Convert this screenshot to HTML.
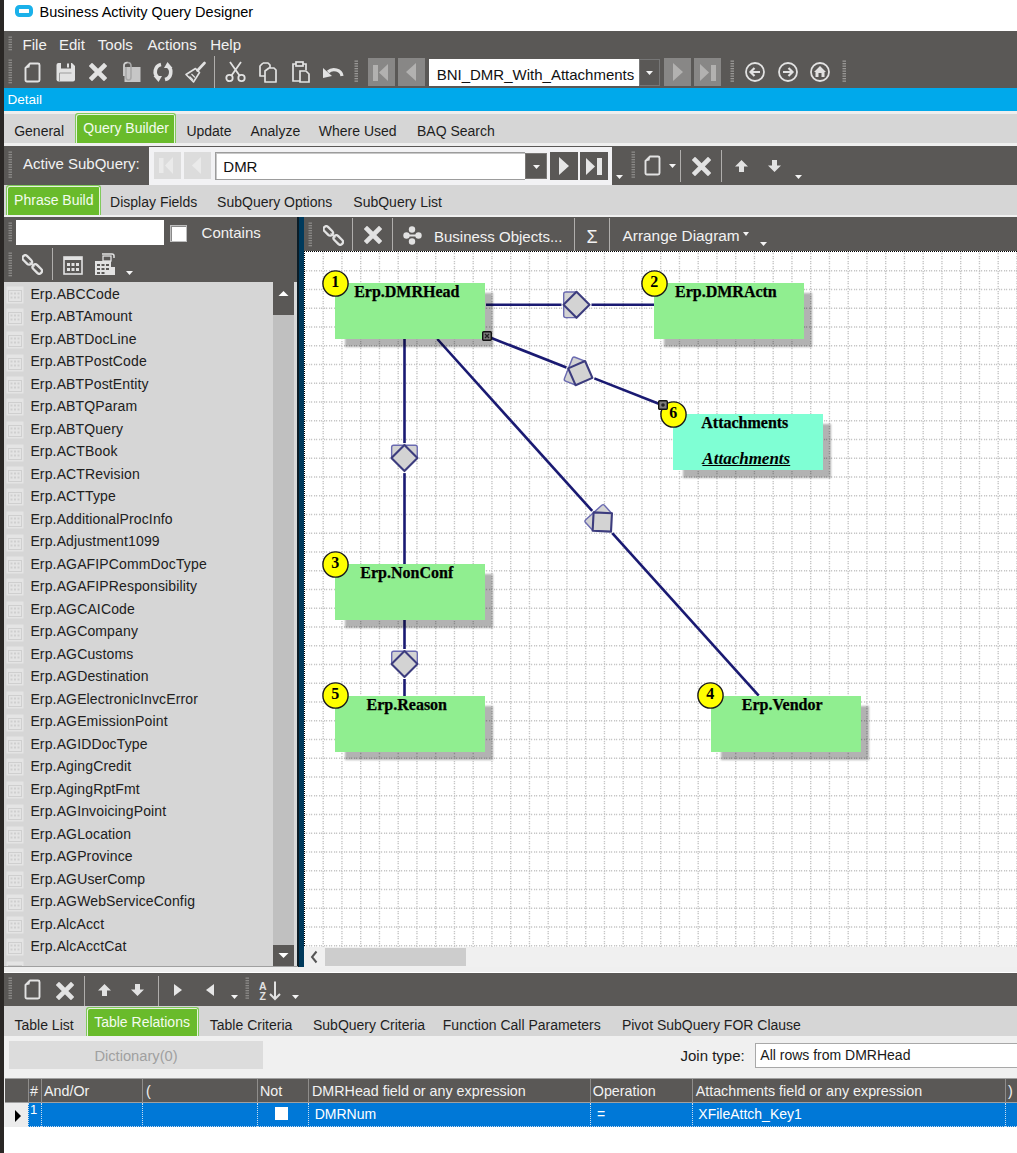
<!DOCTYPE html>
<html><head><meta charset="utf-8"><style>
html,body{margin:0;padding:0;background:#fff;}
#root{position:relative;width:1017px;height:1153px;overflow:hidden;font-family:"Liberation Sans",sans-serif;}
#root>div,#root>span,#root>svg{position:absolute;display:block;}
.t{white-space:nowrap;line-height:1;}
</style></head><body><div id="root">
<div style="left:0px;top:0px;width:4px;height:1153px;background:#2a2725;"></div>
<div style="left:4px;top:0px;width:1013px;height:31px;background:#ffffff;"></div>
<svg style="left:15px;top:5px;" width="18" height="12" viewBox="0 0 18 12"><rect x="2" y="2" width="14" height="8" rx="2.5" fill="none" stroke="#1ab1ea" stroke-width="4"/></svg>
<span class="t" style="left:39.6px;top:4.53px;font-size:14.5px;color:#000;">Business Activity Query Designer</span>
<div style="left:4px;top:31px;width:1013px;height:57px;background:#5a5856;"></div>
<svg style="left:8px;top:36px;" width="4" height="15" viewBox="0 0 4 15"><rect x="0.5" y="0.50" width="3.5" height="1.3" fill="#8c8a88"/><rect x="0.5" y="3.00" width="3.5" height="1.3" fill="#8c8a88"/><rect x="0.5" y="5.50" width="3.5" height="1.3" fill="#8c8a88"/><rect x="0.5" y="8.00" width="3.5" height="1.3" fill="#8c8a88"/><rect x="0.5" y="10.50" width="3.5" height="1.3" fill="#8c8a88"/><rect x="0.5" y="13.00" width="3.5" height="1.3" fill="#8c8a88"/></svg>
<span class="t" style="left:22.6px;top:37.00px;font-size:15px;color:#f2f2f2;">File</span>
<span class="t" style="left:59px;top:37.00px;font-size:15px;color:#f2f2f2;">Edit</span>
<span class="t" style="left:97.8px;top:37.00px;font-size:15px;color:#f2f2f2;">Tools</span>
<span class="t" style="left:147.5px;top:37.00px;font-size:15px;color:#f2f2f2;">Actions</span>
<span class="t" style="left:210.2px;top:37.00px;font-size:15px;color:#f2f2f2;">Help</span>
<svg style="left:8px;top:59px;" width="4" height="26" viewBox="0 0 4 26"><rect x="0.5" y="0.50" width="3.5" height="1.3" fill="#8c8a88"/><rect x="0.5" y="3.00" width="3.5" height="1.3" fill="#8c8a88"/><rect x="0.5" y="5.50" width="3.5" height="1.3" fill="#8c8a88"/><rect x="0.5" y="8.00" width="3.5" height="1.3" fill="#8c8a88"/><rect x="0.5" y="10.50" width="3.5" height="1.3" fill="#8c8a88"/><rect x="0.5" y="13.00" width="3.5" height="1.3" fill="#8c8a88"/><rect x="0.5" y="15.50" width="3.5" height="1.3" fill="#8c8a88"/><rect x="0.5" y="18.00" width="3.5" height="1.3" fill="#8c8a88"/><rect x="0.5" y="20.50" width="3.5" height="1.3" fill="#8c8a88"/><rect x="0.5" y="23.00" width="3.5" height="1.3" fill="#8c8a88"/></svg>
<svg style="left:24px;top:62px;" width="17" height="21" viewBox="0 0 17 21"><path d="M6 1.5H14Q15.5 1.5 15.5 3V18Q15.5 19.5 14 19.5H3Q1.5 19.5 1.5 18V6Z" fill="none" stroke="#e2e2e2" stroke-width="1.9" stroke-linejoin="round"/><path d="M2 6L6 2L5.5 5.5Z" fill="#e2e2e2"/></svg>
<svg style="left:55px;top:62px;" width="21" height="20" viewBox="0 0 21 20"><path d="M1.5 3Q1.5 1 3.5 1H17L20 4V17.5Q20 19.5 18 19.5H3.5Q1.5 19.5 1.5 17.5Z" fill="#e2e2e2"/><rect x="6" y="0" width="10" height="6.5" fill="#5a5856"/><rect x="12" y="1.5" width="2" height="4" fill="#e2e2e2"/><path d="M4.5 19V11H16.5" fill="none" stroke="#9c9c9c" stroke-width="1"/></svg>
<svg style="left:89px;top:63px;" width="18" height="18" viewBox="0 0 18 18"><path d="M3 3L15 15M15 3L3 15" stroke="#e2e2e2" stroke-width="4.6" stroke-linecap="square"/></svg>
<svg style="left:121px;top:61px;" width="21" height="22" viewBox="0 0 21 22"><rect x="3.5" y="6" width="16" height="15" fill="#c6c6c6"/><path d="M3 15V5Q3 1.5 6.5 1.5Q10 1.5 10 5V16Q10 19 7.5 19Q5 19 5 16V6" fill="none" stroke="#a8a8a8" stroke-width="1.6"/><path d="M3 15V5Q3 1.5 6.5 1.5" fill="none" stroke="#d0d0d0" stroke-width="1.6"/></svg>
<svg style="left:152px;top:61px;" width="22" height="22" viewBox="0 0 22 22"><g fill="none" stroke="#e2e2e2" stroke-width="3.6"><path d="M9 3.5A7.5 7.5 0 0 0 6.5 17"/><path d="M13 18.5A7.5 7.5 0 0 0 15.5 5"/></g><path d="M1.5 15H10L6.5 21Z" fill="#e2e2e2"/><path d="M20.5 7H12L15.5 1Z" fill="#e2e2e2"/></svg>
<svg style="left:185px;top:61px;" width="21" height="22" viewBox="0 0 21 22"><path d="M19.5 2L12.5 9.5" stroke="#e2e2e2" stroke-width="2.6" stroke-linecap="round"/><path d="M10.5 7.5L14.5 11.5L8.5 21L1 13.5Z" fill="none" stroke="#e2e2e2" stroke-width="1.6" stroke-linejoin="round"/><path d="M4.5 15.5L8 19M6.5 13L10 16.5" stroke="#e2e2e2" stroke-width="1.2"/></svg>
<div style="left:214px;top:56px;width:1px;height:32px;background:#b0aeac;"></div>
<svg style="left:225px;top:61px;" width="21" height="22" viewBox="0 0 21 22"><g fill="none" stroke="#e2e2e2" stroke-width="1.8"><circle cx="4.5" cy="17" r="3.2"/><circle cx="16.5" cy="17" r="3.2"/><path d="M6.5 14.5L16 1M14.5 14.5L5 1"/></g></svg>
<svg style="left:259px;top:61px;" width="18" height="22" viewBox="0 0 18 22"><g fill="none" stroke="#e2e2e2" stroke-width="1.7" stroke-linejoin="round"><path d="M4 2H9L11 4V7"/><path d="M4 2L1 5V15H6"/><path d="M10 7H15L17 9V21H6V10Z"/></g></svg>
<svg style="left:291px;top:61px;" width="19" height="22" viewBox="0 0 19 22"><g fill="none" stroke="#e2e2e2" stroke-width="1.7"><path d="M5 3H2V20H9"/><path d="M12 3H15V9"/><rect x="5" y="1" width="7" height="4"/><path d="M9 10H15L18 13V21H9Z"/></g></svg>
<svg style="left:322px;top:63px;" width="22" height="18" viewBox="0 0 22 18"><path d="M6 9A8 7 0 0 1 20 13" fill="none" stroke="#e2e2e2" stroke-width="3.2"/><path d="M1 5L1 15L10 13Z" fill="#e2e2e2"/></svg>
<svg style="left:354px;top:60px;" width="4" height="24" viewBox="0 0 4 24"><rect x="0.5" y="0.50" width="3.5" height="1.3" fill="#9a9896"/><rect x="0.5" y="3.00" width="3.5" height="1.3" fill="#9a9896"/><rect x="0.5" y="5.50" width="3.5" height="1.3" fill="#9a9896"/><rect x="0.5" y="8.00" width="3.5" height="1.3" fill="#9a9896"/><rect x="0.5" y="10.50" width="3.5" height="1.3" fill="#9a9896"/><rect x="0.5" y="13.00" width="3.5" height="1.3" fill="#9a9896"/><rect x="0.5" y="15.50" width="3.5" height="1.3" fill="#9a9896"/><rect x="0.5" y="18.00" width="3.5" height="1.3" fill="#9a9896"/><rect x="0.5" y="20.50" width="3.5" height="1.3" fill="#9a9896"/></svg>
<div style="left:368px;top:58px;width:27px;height:28px;background:#888786;"></div>
<svg style="left:368px;top:58px;" width="27" height="28" viewBox="0 0 27 28"><rect x="5" y="7" width="5" height="16" fill="#b2b1b0"/><path d="M20 6V23L11 14.5Z" fill="#b2b1b0"/></svg>
<div style="left:398px;top:58px;width:27px;height:28px;background:#888786;"></div>
<svg style="left:398px;top:58px;" width="27" height="28" viewBox="0 0 27 28"><path d="M18 5V23L8 14Z" fill="#b2b1b0"/></svg>
<div style="left:429px;top:59px;width:210px;height:27px;background:#ffffff;"></div>
<span class="t" style="left:436.7px;top:66.80px;font-size:15px;color:#111;">BNI_DMR_With_Attachments</span>
<div style="left:639px;top:59px;width:21px;height:27px;background:#5a5856;box-shadow:inset 0 0 0 1px #777;"></div>
<svg style="left:646.0px;top:71px;" width="7" height="4" viewBox="0 0 7 4"><path d="M0 0H7L3.5 4Z" fill="#f4f4f4"/></svg>
<div style="left:664px;top:58px;width:27px;height:28px;background:#888786;"></div>
<svg style="left:664px;top:58px;" width="27" height="28" viewBox="0 0 27 28"><path d="M9 5V23L19 14Z" fill="#b2b1b0"/></svg>
<div style="left:694px;top:58px;width:27px;height:28px;background:#888786;"></div>
<svg style="left:694px;top:58px;" width="27" height="28" viewBox="0 0 27 28"><path d="M6 6V23L15 14.5Z" fill="#b2b1b0"/><rect x="17" y="7" width="5" height="16" fill="#b2b1b0"/></svg>
<svg style="left:730px;top:60px;" width="4" height="24" viewBox="0 0 4 24"><rect x="0.5" y="0.50" width="3.5" height="1.3" fill="#9a9896"/><rect x="0.5" y="3.00" width="3.5" height="1.3" fill="#9a9896"/><rect x="0.5" y="5.50" width="3.5" height="1.3" fill="#9a9896"/><rect x="0.5" y="8.00" width="3.5" height="1.3" fill="#9a9896"/><rect x="0.5" y="10.50" width="3.5" height="1.3" fill="#9a9896"/><rect x="0.5" y="13.00" width="3.5" height="1.3" fill="#9a9896"/><rect x="0.5" y="15.50" width="3.5" height="1.3" fill="#9a9896"/><rect x="0.5" y="18.00" width="3.5" height="1.3" fill="#9a9896"/><rect x="0.5" y="20.50" width="3.5" height="1.3" fill="#9a9896"/></svg>
<svg style="left:743.6px;top:61.4px;" width="22" height="22" viewBox="0 0 22 22"><circle cx="11" cy="11" r="9" fill="none" stroke="#e2e2e2" stroke-width="1.8"/><path d="M16 11H7M10.5 7L6.5 11L10.5 15" fill="none" stroke="#e2e2e2" stroke-width="2.2"/></svg>
<svg style="left:776.7px;top:61.4px;" width="22" height="22" viewBox="0 0 22 22"><circle cx="11" cy="11" r="9" fill="none" stroke="#e2e2e2" stroke-width="1.8"/><path d="M6 11H15M11.5 7L15.5 11L11.5 15" fill="none" stroke="#e2e2e2" stroke-width="2.2"/></svg>
<svg style="left:809.2px;top:61.4px;" width="22" height="22" viewBox="0 0 22 22"><circle cx="11" cy="11" r="9" fill="none" stroke="#e2e2e2" stroke-width="1.8"/><path d="M11 5L17 11H15.5V16H6.5V11H5Z" fill="#e2e2e2"/><rect x="9.5" y="12" width="3" height="4" fill="#5a5856"/></svg>
<svg style="left:842px;top:60px;" width="4" height="24" viewBox="0 0 4 24"><rect x="0.5" y="0.50" width="3.5" height="1.3" fill="#9a9896"/><rect x="0.5" y="3.00" width="3.5" height="1.3" fill="#9a9896"/><rect x="0.5" y="5.50" width="3.5" height="1.3" fill="#9a9896"/><rect x="0.5" y="8.00" width="3.5" height="1.3" fill="#9a9896"/><rect x="0.5" y="10.50" width="3.5" height="1.3" fill="#9a9896"/><rect x="0.5" y="13.00" width="3.5" height="1.3" fill="#9a9896"/><rect x="0.5" y="15.50" width="3.5" height="1.3" fill="#9a9896"/><rect x="0.5" y="18.00" width="3.5" height="1.3" fill="#9a9896"/><rect x="0.5" y="20.50" width="3.5" height="1.3" fill="#9a9896"/></svg>
<div style="left:4px;top:88px;width:1013px;height:23px;background:#00a9eb;"></div>
<span class="t" style="left:7.5px;top:93.37px;font-size:13.5px;color:#ffffff;">Detail</span>
<div style="left:4px;top:111px;width:1013px;height:3px;background:#eeeeee;"></div>
<div style="left:4px;top:114px;width:1013px;height:30px;background:#d6d6d6;"></div>
<div style="left:75px;top:113px;width:99px;height:30px;background:#69bb2b;border:1px solid #80ca5c;border-bottom:none;border-radius:3px 3px 0 0;box-shadow:inset 1px 1px 0 #e6f3dc,inset -1px 0 0 #e6f3dc;"></div>
<span class="t" style="left:14.2px;top:124.15px;font-size:14px;color:#1e1e1e;">General</span>
<span class="t" style="left:83.3px;top:121.15px;font-size:14px;color:#f4fbef;">Query Builder</span>
<span class="t" style="left:186.4px;top:124.15px;font-size:14px;color:#1e1e1e;">Update</span>
<span class="t" style="left:250.4px;top:124.15px;font-size:14px;color:#1e1e1e;">Analyze</span>
<span class="t" style="left:318.8px;top:124.15px;font-size:14px;color:#1e1e1e;">Where Used</span>
<span class="t" style="left:417px;top:124.15px;font-size:14px;color:#1e1e1e;">BAQ Search</span>
<div style="left:4px;top:143px;width:1013px;height:3px;background:#efefef;"></div>
<div style="left:4px;top:146px;width:1013px;height:39px;background:#5a5856;"></div>
<svg style="left:8px;top:151px;" width="4" height="28" viewBox="0 0 4 28"><rect x="0.5" y="0.50" width="3.5" height="1.3" fill="#8c8a88"/><rect x="0.5" y="3.00" width="3.5" height="1.3" fill="#8c8a88"/><rect x="0.5" y="5.50" width="3.5" height="1.3" fill="#8c8a88"/><rect x="0.5" y="8.00" width="3.5" height="1.3" fill="#8c8a88"/><rect x="0.5" y="10.50" width="3.5" height="1.3" fill="#8c8a88"/><rect x="0.5" y="13.00" width="3.5" height="1.3" fill="#8c8a88"/><rect x="0.5" y="15.50" width="3.5" height="1.3" fill="#8c8a88"/><rect x="0.5" y="18.00" width="3.5" height="1.3" fill="#8c8a88"/><rect x="0.5" y="20.50" width="3.5" height="1.3" fill="#8c8a88"/><rect x="0.5" y="23.00" width="3.5" height="1.3" fill="#8c8a88"/><rect x="0.5" y="25.50" width="3.5" height="1.3" fill="#8c8a88"/></svg>
<span class="t" style="left:23px;top:156.20px;font-size:15px;color:#f2f2f2;">Active SubQuery:</span>
<div style="left:149px;top:147px;width:463px;height:38px;background:#f2f2f4;"></div>
<div style="left:154px;top:152px;width:27px;height:27px;background:#dcdcdc;"></div>
<svg style="left:154px;top:152px;" width="27" height="27" viewBox="0 0 27 27"><rect x="5" y="6" width="4.5" height="15" fill="#eaeaea"/><path d="M19 5V22L11 13.5Z" fill="#eaeaea"/></svg>
<div style="left:184px;top:152px;width:27px;height:27px;background:#dcdcdc;"></div>
<svg style="left:184px;top:152px;" width="27" height="27" viewBox="0 0 27 27"><path d="M17 5V22L8 13.5Z" fill="#eaeaea"/></svg>
<div style="left:215px;top:152px;width:310px;height:28px;background:#ffffff;box-sizing:border-box;border:1px solid #9c9c9c;border-right:none;box-shadow:inset 1px 1px 0 #c8c8c8;"></div>
<span class="t" style="left:223.3px;top:159.00px;font-size:15px;color:#111;">DMR</span>
<div style="left:525px;top:153px;width:22px;height:26px;background:#5a5856;box-shadow:inset 0 0 0 1px #7a7876;"></div>
<svg style="left:532.5px;top:165px;" width="7" height="4" viewBox="0 0 7 4"><path d="M0 0H7L3.5 4Z" fill="#f4f4f4"/></svg>
<div style="left:550px;top:152px;width:28px;height:28px;background:#5a5856;"></div>
<svg style="left:550px;top:152px;" width="28" height="28" viewBox="0 0 28 28"><path d="M9 5V23L19 14Z" fill="#e6e6e6"/></svg>
<div style="left:580px;top:152px;width:28px;height:28px;background:#5a5856;"></div>
<svg style="left:580px;top:152px;" width="28" height="28" viewBox="0 0 28 28"><path d="M6 6V23L15 14.5Z" fill="#e6e6e6"/><rect x="17" y="6" width="5" height="17" fill="#e6e6e6"/></svg>
<svg style="left:616.0px;top:174.5px;" width="7" height="4" viewBox="0 0 7 4"><path d="M0 0H7L3.5 4Z" fill="#f4f4f4"/></svg>
<svg style="left:631px;top:151px;" width="4" height="28" viewBox="0 0 4 28"><rect x="0.5" y="0.50" width="3.5" height="1.3" fill="#8c8a88"/><rect x="0.5" y="3.00" width="3.5" height="1.3" fill="#8c8a88"/><rect x="0.5" y="5.50" width="3.5" height="1.3" fill="#8c8a88"/><rect x="0.5" y="8.00" width="3.5" height="1.3" fill="#8c8a88"/><rect x="0.5" y="10.50" width="3.5" height="1.3" fill="#8c8a88"/><rect x="0.5" y="13.00" width="3.5" height="1.3" fill="#8c8a88"/><rect x="0.5" y="15.50" width="3.5" height="1.3" fill="#8c8a88"/><rect x="0.5" y="18.00" width="3.5" height="1.3" fill="#8c8a88"/><rect x="0.5" y="20.50" width="3.5" height="1.3" fill="#8c8a88"/><rect x="0.5" y="23.00" width="3.5" height="1.3" fill="#8c8a88"/><rect x="0.5" y="25.50" width="3.5" height="1.3" fill="#8c8a88"/></svg>
<svg style="left:644px;top:155px;" width="17" height="21" viewBox="0 0 17 21"><path d="M6 1.5H14Q15.5 1.5 15.5 3V18Q15.5 19.5 14 19.5H3Q1.5 19.5 1.5 18V6Z" fill="none" stroke="#e2e2e2" stroke-width="1.9" stroke-linejoin="round"/><path d="M2 6L6 2L5.5 5.5Z" fill="#e2e2e2"/></svg>
<svg style="left:668.5px;top:163.5px;" width="7" height="4" viewBox="0 0 7 4"><path d="M0 0H7L3.5 4Z" fill="#f4f4f4"/></svg>
<div style="left:680px;top:150px;width:1px;height:32px;background:#b0aeac;"></div>
<svg style="left:692px;top:157px;" width="19" height="19" viewBox="0 0 19 19"><path d="M3 3L16 16M16 3L3 16" stroke="#e2e2e2" stroke-width="4.6" stroke-linecap="square"/></svg>
<div style="left:721px;top:150px;width:1px;height:32px;background:#b0aeac;"></div>
<svg style="left:735px;top:160px;" width="13" height="12" viewBox="0 0 13 12"><path d="M6.5 0L13 6.5H9V12H4V6.5H0Z" fill="#e2e2e2"/></svg>
<svg style="left:768px;top:160px;" width="13" height="12" viewBox="0 0 13 12"><path d="M6.5 12L13 5.5H9V0H4V5.5H0Z" fill="#e2e2e2"/></svg>
<svg style="left:794.5px;top:175px;" width="7" height="4" viewBox="0 0 7 4"><path d="M0 0H7L3.5 4Z" fill="#f4f4f4"/></svg>
<div style="left:4px;top:185px;width:1013px;height:30px;background:#d6d6d6;"></div>
<div style="left:6px;top:185px;width:93px;height:29px;background:#69bb2b;border:1px solid #80ca5c;border-bottom:none;border-radius:3px 3px 0 0;box-shadow:inset 1px 1px 0 #e6f3dc,inset -1px 0 0 #e6f3dc;"></div>
<span class="t" style="left:14.1px;top:192.75px;font-size:14px;color:#f4fbef;">Phrase Build</span>
<span class="t" style="left:110.1px;top:195.05px;font-size:14px;color:#1e1e1e;">Display Fields</span>
<span class="t" style="left:217.1px;top:195.05px;font-size:14px;color:#1e1e1e;">SubQuery Options</span>
<span class="t" style="left:353.3px;top:195.05px;font-size:14px;color:#1e1e1e;">SubQuery List</span>
<div style="left:4px;top:215px;width:1013px;height:2px;background:#f0f0f0;"></div>
<div style="left:4px;top:217px;width:294px;height:65px;background:#5a5856;"></div>
<svg style="left:8px;top:222px;" width="4" height="22" viewBox="0 0 4 22"><rect x="0.5" y="0.50" width="3.5" height="1.3" fill="#8c8a88"/><rect x="0.5" y="3.00" width="3.5" height="1.3" fill="#8c8a88"/><rect x="0.5" y="5.50" width="3.5" height="1.3" fill="#8c8a88"/><rect x="0.5" y="8.00" width="3.5" height="1.3" fill="#8c8a88"/><rect x="0.5" y="10.50" width="3.5" height="1.3" fill="#8c8a88"/><rect x="0.5" y="13.00" width="3.5" height="1.3" fill="#8c8a88"/><rect x="0.5" y="15.50" width="3.5" height="1.3" fill="#8c8a88"/><rect x="0.5" y="18.00" width="3.5" height="1.3" fill="#8c8a88"/></svg>
<div style="left:16px;top:220px;width:148px;height:25px;background:#ffffff;"></div>
<div style="left:170px;top:225px;width:17px;height:17px;background:#ffffff;box-sizing:border-box;border:1px solid #bdbdbd;box-shadow:inset 1px 1px 0 #8a8a8a;"></div>
<span class="t" style="left:201.6px;top:225.30px;font-size:15px;color:#f2f2f2;">Contains</span>
<svg style="left:8px;top:252px;" width="4" height="27" viewBox="0 0 4 27"><rect x="0.5" y="0.50" width="3.5" height="1.3" fill="#8c8a88"/><rect x="0.5" y="3.00" width="3.5" height="1.3" fill="#8c8a88"/><rect x="0.5" y="5.50" width="3.5" height="1.3" fill="#8c8a88"/><rect x="0.5" y="8.00" width="3.5" height="1.3" fill="#8c8a88"/><rect x="0.5" y="10.50" width="3.5" height="1.3" fill="#8c8a88"/><rect x="0.5" y="13.00" width="3.5" height="1.3" fill="#8c8a88"/><rect x="0.5" y="15.50" width="3.5" height="1.3" fill="#8c8a88"/><rect x="0.5" y="18.00" width="3.5" height="1.3" fill="#8c8a88"/><rect x="0.5" y="20.50" width="3.5" height="1.3" fill="#8c8a88"/><rect x="0.5" y="23.00" width="3.5" height="1.3" fill="#8c8a88"/></svg>
<svg style="left:22px;top:254px;" width="21" height="21" viewBox="0 0 21 21"><g fill="none" stroke="#e2e2e2" stroke-width="2.3"><rect x="2.5" y="0.5" width="5.5" height="11" rx="2.75" transform="rotate(-45 5.25 6)"/><rect x="12.5" y="9.5" width="5.5" height="11" rx="2.75" transform="rotate(-45 15.25 15)"/></g><path d="M7.5 8.5L12.5 12.5" stroke="#e2e2e2" stroke-width="1.2"/></svg>
<div style="left:52px;top:248px;width:1px;height:32px;background:#b0aeac;"></div>
<svg style="left:63px;top:256px;" width="20" height="19" viewBox="0 0 20 19"><rect x="1" y="1" width="18" height="17" fill="none" stroke="#e2e2e2" stroke-width="1.6"/><rect x="1" y="1" width="18" height="3" fill="#e2e2e2"/><g fill="#e2e2e2"><rect x="4" y="7" width="3" height="3"/><rect x="8.5" y="7" width="3" height="3"/><rect x="13" y="7" width="3" height="3"/><rect x="4" y="12" width="3" height="3"/><rect x="8.5" y="12" width="3" height="3"/><rect x="13" y="12" width="3" height="3"/></g></svg>
<svg style="left:94px;top:253px;" width="23" height="23" viewBox="0 0 23 23"><path d="M8 1H18Q20 1 20 3V5" fill="none" stroke="#e2e2e2" stroke-width="1.5"/><rect x="9" y="3" width="8" height="5" fill="none" stroke="#e2e2e2" stroke-width="1.3"/><rect x="1" y="8" width="16" height="14" fill="#e2e2e2"/><g fill="#5a5856"><rect x="3" y="11" width="3" height="2"/><rect x="7.5" y="11" width="3" height="2"/><rect x="12" y="11" width="3" height="2"/><rect x="3" y="15" width="3" height="2"/><rect x="7.5" y="15" width="3" height="2"/><rect x="12" y="15" width="3" height="2"/><rect x="3" y="19" width="3" height="2"/><rect x="7.5" y="19" width="3" height="2"/></g><path d="M17 14H21V22H15" fill="#e2e2e2"/></svg>
<svg style="left:125.5px;top:270.5px;" width="7" height="4" viewBox="0 0 7 4"><path d="M0 0H7L3.5 4Z" fill="#f4f4f4"/></svg>
<div style="left:4px;top:282px;width:269px;height:684px;background:#d6d6d6;"></div>
<svg style="left:6px;top:286px;" width="18" height="18" viewBox="0 0 18 18"><rect x="0.5" y="0.5" width="17" height="17" fill="#e4e4e4"/><rect x="2.5" y="4.5" width="13" height="11" fill="none" stroke="#cfcfcf" stroke-width="1"/><g fill="#cfcfcf"><rect x="4.5" y="6.5" width="2" height="2"/><rect x="8" y="6.5" width="2" height="2"/><rect x="11.5" y="6.5" width="2" height="2"/><rect x="4.5" y="10.5" width="2" height="2"/><rect x="8" y="10.5" width="2" height="2"/><rect x="11.5" y="10.5" width="2" height="2"/></g></svg>
<span class="t" style="left:30.4px;top:286.75px;font-size:14px;color:#202020;letter-spacing:0.14px;">Erp.ABCCode</span>
<svg style="left:6px;top:308px;" width="18" height="18" viewBox="0 0 18 18"><rect x="0.5" y="0.5" width="17" height="17" fill="#e4e4e4"/><rect x="2.5" y="4.5" width="13" height="11" fill="none" stroke="#cfcfcf" stroke-width="1"/><g fill="#cfcfcf"><rect x="4.5" y="6.5" width="2" height="2"/><rect x="8" y="6.5" width="2" height="2"/><rect x="11.5" y="6.5" width="2" height="2"/><rect x="4.5" y="10.5" width="2" height="2"/><rect x="8" y="10.5" width="2" height="2"/><rect x="11.5" y="10.5" width="2" height="2"/></g></svg>
<span class="t" style="left:30.4px;top:309.25px;font-size:14px;color:#202020;letter-spacing:0.14px;">Erp.ABTAmount</span>
<svg style="left:6px;top:331px;" width="18" height="18" viewBox="0 0 18 18"><rect x="0.5" y="0.5" width="17" height="17" fill="#e4e4e4"/><rect x="2.5" y="4.5" width="13" height="11" fill="none" stroke="#cfcfcf" stroke-width="1"/><g fill="#cfcfcf"><rect x="4.5" y="6.5" width="2" height="2"/><rect x="8" y="6.5" width="2" height="2"/><rect x="11.5" y="6.5" width="2" height="2"/><rect x="4.5" y="10.5" width="2" height="2"/><rect x="8" y="10.5" width="2" height="2"/><rect x="11.5" y="10.5" width="2" height="2"/></g></svg>
<span class="t" style="left:30.4px;top:331.75px;font-size:14px;color:#202020;letter-spacing:0.14px;">Erp.ABTDocLine</span>
<svg style="left:6px;top:354px;" width="18" height="18" viewBox="0 0 18 18"><rect x="0.5" y="0.5" width="17" height="17" fill="#e4e4e4"/><rect x="2.5" y="4.5" width="13" height="11" fill="none" stroke="#cfcfcf" stroke-width="1"/><g fill="#cfcfcf"><rect x="4.5" y="6.5" width="2" height="2"/><rect x="8" y="6.5" width="2" height="2"/><rect x="11.5" y="6.5" width="2" height="2"/><rect x="4.5" y="10.5" width="2" height="2"/><rect x="8" y="10.5" width="2" height="2"/><rect x="11.5" y="10.5" width="2" height="2"/></g></svg>
<span class="t" style="left:30.4px;top:354.25px;font-size:14px;color:#202020;letter-spacing:0.14px;">Erp.ABTPostCode</span>
<svg style="left:6px;top:376px;" width="18" height="18" viewBox="0 0 18 18"><rect x="0.5" y="0.5" width="17" height="17" fill="#e4e4e4"/><rect x="2.5" y="4.5" width="13" height="11" fill="none" stroke="#cfcfcf" stroke-width="1"/><g fill="#cfcfcf"><rect x="4.5" y="6.5" width="2" height="2"/><rect x="8" y="6.5" width="2" height="2"/><rect x="11.5" y="6.5" width="2" height="2"/><rect x="4.5" y="10.5" width="2" height="2"/><rect x="8" y="10.5" width="2" height="2"/><rect x="11.5" y="10.5" width="2" height="2"/></g></svg>
<span class="t" style="left:30.4px;top:376.75px;font-size:14px;color:#202020;letter-spacing:0.14px;">Erp.ABTPostEntity</span>
<svg style="left:6px;top:398px;" width="18" height="18" viewBox="0 0 18 18"><rect x="0.5" y="0.5" width="17" height="17" fill="#e4e4e4"/><rect x="2.5" y="4.5" width="13" height="11" fill="none" stroke="#cfcfcf" stroke-width="1"/><g fill="#cfcfcf"><rect x="4.5" y="6.5" width="2" height="2"/><rect x="8" y="6.5" width="2" height="2"/><rect x="11.5" y="6.5" width="2" height="2"/><rect x="4.5" y="10.5" width="2" height="2"/><rect x="8" y="10.5" width="2" height="2"/><rect x="11.5" y="10.5" width="2" height="2"/></g></svg>
<span class="t" style="left:30.4px;top:399.25px;font-size:14px;color:#202020;letter-spacing:0.14px;">Erp.ABTQParam</span>
<svg style="left:6px;top:421px;" width="18" height="18" viewBox="0 0 18 18"><rect x="0.5" y="0.5" width="17" height="17" fill="#e4e4e4"/><rect x="2.5" y="4.5" width="13" height="11" fill="none" stroke="#cfcfcf" stroke-width="1"/><g fill="#cfcfcf"><rect x="4.5" y="6.5" width="2" height="2"/><rect x="8" y="6.5" width="2" height="2"/><rect x="11.5" y="6.5" width="2" height="2"/><rect x="4.5" y="10.5" width="2" height="2"/><rect x="8" y="10.5" width="2" height="2"/><rect x="11.5" y="10.5" width="2" height="2"/></g></svg>
<span class="t" style="left:30.4px;top:421.75px;font-size:14px;color:#202020;letter-spacing:0.14px;">Erp.ABTQuery</span>
<svg style="left:6px;top:444px;" width="18" height="18" viewBox="0 0 18 18"><rect x="0.5" y="0.5" width="17" height="17" fill="#e4e4e4"/><rect x="2.5" y="4.5" width="13" height="11" fill="none" stroke="#cfcfcf" stroke-width="1"/><g fill="#cfcfcf"><rect x="4.5" y="6.5" width="2" height="2"/><rect x="8" y="6.5" width="2" height="2"/><rect x="11.5" y="6.5" width="2" height="2"/><rect x="4.5" y="10.5" width="2" height="2"/><rect x="8" y="10.5" width="2" height="2"/><rect x="11.5" y="10.5" width="2" height="2"/></g></svg>
<span class="t" style="left:30.4px;top:444.25px;font-size:14px;color:#202020;letter-spacing:0.14px;">Erp.ACTBook</span>
<svg style="left:6px;top:466px;" width="18" height="18" viewBox="0 0 18 18"><rect x="0.5" y="0.5" width="17" height="17" fill="#e4e4e4"/><rect x="2.5" y="4.5" width="13" height="11" fill="none" stroke="#cfcfcf" stroke-width="1"/><g fill="#cfcfcf"><rect x="4.5" y="6.5" width="2" height="2"/><rect x="8" y="6.5" width="2" height="2"/><rect x="11.5" y="6.5" width="2" height="2"/><rect x="4.5" y="10.5" width="2" height="2"/><rect x="8" y="10.5" width="2" height="2"/><rect x="11.5" y="10.5" width="2" height="2"/></g></svg>
<span class="t" style="left:30.4px;top:466.75px;font-size:14px;color:#202020;letter-spacing:0.14px;">Erp.ACTRevision</span>
<svg style="left:6px;top:488px;" width="18" height="18" viewBox="0 0 18 18"><rect x="0.5" y="0.5" width="17" height="17" fill="#e4e4e4"/><rect x="2.5" y="4.5" width="13" height="11" fill="none" stroke="#cfcfcf" stroke-width="1"/><g fill="#cfcfcf"><rect x="4.5" y="6.5" width="2" height="2"/><rect x="8" y="6.5" width="2" height="2"/><rect x="11.5" y="6.5" width="2" height="2"/><rect x="4.5" y="10.5" width="2" height="2"/><rect x="8" y="10.5" width="2" height="2"/><rect x="11.5" y="10.5" width="2" height="2"/></g></svg>
<span class="t" style="left:30.4px;top:489.25px;font-size:14px;color:#202020;letter-spacing:0.14px;">Erp.ACTType</span>
<svg style="left:6px;top:511px;" width="18" height="18" viewBox="0 0 18 18"><rect x="0.5" y="0.5" width="17" height="17" fill="#e4e4e4"/><rect x="2.5" y="4.5" width="13" height="11" fill="none" stroke="#cfcfcf" stroke-width="1"/><g fill="#cfcfcf"><rect x="4.5" y="6.5" width="2" height="2"/><rect x="8" y="6.5" width="2" height="2"/><rect x="11.5" y="6.5" width="2" height="2"/><rect x="4.5" y="10.5" width="2" height="2"/><rect x="8" y="10.5" width="2" height="2"/><rect x="11.5" y="10.5" width="2" height="2"/></g></svg>
<span class="t" style="left:30.4px;top:511.75px;font-size:14px;color:#202020;letter-spacing:0.14px;">Erp.AdditionalProcInfo</span>
<svg style="left:6px;top:534px;" width="18" height="18" viewBox="0 0 18 18"><rect x="0.5" y="0.5" width="17" height="17" fill="#e4e4e4"/><rect x="2.5" y="4.5" width="13" height="11" fill="none" stroke="#cfcfcf" stroke-width="1"/><g fill="#cfcfcf"><rect x="4.5" y="6.5" width="2" height="2"/><rect x="8" y="6.5" width="2" height="2"/><rect x="11.5" y="6.5" width="2" height="2"/><rect x="4.5" y="10.5" width="2" height="2"/><rect x="8" y="10.5" width="2" height="2"/><rect x="11.5" y="10.5" width="2" height="2"/></g></svg>
<span class="t" style="left:30.4px;top:534.25px;font-size:14px;color:#202020;letter-spacing:0.14px;">Erp.Adjustment1099</span>
<svg style="left:6px;top:556px;" width="18" height="18" viewBox="0 0 18 18"><rect x="0.5" y="0.5" width="17" height="17" fill="#e4e4e4"/><rect x="2.5" y="4.5" width="13" height="11" fill="none" stroke="#cfcfcf" stroke-width="1"/><g fill="#cfcfcf"><rect x="4.5" y="6.5" width="2" height="2"/><rect x="8" y="6.5" width="2" height="2"/><rect x="11.5" y="6.5" width="2" height="2"/><rect x="4.5" y="10.5" width="2" height="2"/><rect x="8" y="10.5" width="2" height="2"/><rect x="11.5" y="10.5" width="2" height="2"/></g></svg>
<span class="t" style="left:30.4px;top:556.75px;font-size:14px;color:#202020;letter-spacing:0.14px;">Erp.AGAFIPCommDocType</span>
<svg style="left:6px;top:578px;" width="18" height="18" viewBox="0 0 18 18"><rect x="0.5" y="0.5" width="17" height="17" fill="#e4e4e4"/><rect x="2.5" y="4.5" width="13" height="11" fill="none" stroke="#cfcfcf" stroke-width="1"/><g fill="#cfcfcf"><rect x="4.5" y="6.5" width="2" height="2"/><rect x="8" y="6.5" width="2" height="2"/><rect x="11.5" y="6.5" width="2" height="2"/><rect x="4.5" y="10.5" width="2" height="2"/><rect x="8" y="10.5" width="2" height="2"/><rect x="11.5" y="10.5" width="2" height="2"/></g></svg>
<span class="t" style="left:30.4px;top:579.25px;font-size:14px;color:#202020;letter-spacing:0.14px;">Erp.AGAFIPResponsibility</span>
<svg style="left:6px;top:601px;" width="18" height="18" viewBox="0 0 18 18"><rect x="0.5" y="0.5" width="17" height="17" fill="#e4e4e4"/><rect x="2.5" y="4.5" width="13" height="11" fill="none" stroke="#cfcfcf" stroke-width="1"/><g fill="#cfcfcf"><rect x="4.5" y="6.5" width="2" height="2"/><rect x="8" y="6.5" width="2" height="2"/><rect x="11.5" y="6.5" width="2" height="2"/><rect x="4.5" y="10.5" width="2" height="2"/><rect x="8" y="10.5" width="2" height="2"/><rect x="11.5" y="10.5" width="2" height="2"/></g></svg>
<span class="t" style="left:30.4px;top:601.75px;font-size:14px;color:#202020;letter-spacing:0.14px;">Erp.AGCAICode</span>
<svg style="left:6px;top:624px;" width="18" height="18" viewBox="0 0 18 18"><rect x="0.5" y="0.5" width="17" height="17" fill="#e4e4e4"/><rect x="2.5" y="4.5" width="13" height="11" fill="none" stroke="#cfcfcf" stroke-width="1"/><g fill="#cfcfcf"><rect x="4.5" y="6.5" width="2" height="2"/><rect x="8" y="6.5" width="2" height="2"/><rect x="11.5" y="6.5" width="2" height="2"/><rect x="4.5" y="10.5" width="2" height="2"/><rect x="8" y="10.5" width="2" height="2"/><rect x="11.5" y="10.5" width="2" height="2"/></g></svg>
<span class="t" style="left:30.4px;top:624.25px;font-size:14px;color:#202020;letter-spacing:0.14px;">Erp.AGCompany</span>
<svg style="left:6px;top:646px;" width="18" height="18" viewBox="0 0 18 18"><rect x="0.5" y="0.5" width="17" height="17" fill="#e4e4e4"/><rect x="2.5" y="4.5" width="13" height="11" fill="none" stroke="#cfcfcf" stroke-width="1"/><g fill="#cfcfcf"><rect x="4.5" y="6.5" width="2" height="2"/><rect x="8" y="6.5" width="2" height="2"/><rect x="11.5" y="6.5" width="2" height="2"/><rect x="4.5" y="10.5" width="2" height="2"/><rect x="8" y="10.5" width="2" height="2"/><rect x="11.5" y="10.5" width="2" height="2"/></g></svg>
<span class="t" style="left:30.4px;top:646.75px;font-size:14px;color:#202020;letter-spacing:0.14px;">Erp.AGCustoms</span>
<svg style="left:6px;top:668px;" width="18" height="18" viewBox="0 0 18 18"><rect x="0.5" y="0.5" width="17" height="17" fill="#e4e4e4"/><rect x="2.5" y="4.5" width="13" height="11" fill="none" stroke="#cfcfcf" stroke-width="1"/><g fill="#cfcfcf"><rect x="4.5" y="6.5" width="2" height="2"/><rect x="8" y="6.5" width="2" height="2"/><rect x="11.5" y="6.5" width="2" height="2"/><rect x="4.5" y="10.5" width="2" height="2"/><rect x="8" y="10.5" width="2" height="2"/><rect x="11.5" y="10.5" width="2" height="2"/></g></svg>
<span class="t" style="left:30.4px;top:669.25px;font-size:14px;color:#202020;letter-spacing:0.14px;">Erp.AGDestination</span>
<svg style="left:6px;top:691px;" width="18" height="18" viewBox="0 0 18 18"><rect x="0.5" y="0.5" width="17" height="17" fill="#e4e4e4"/><rect x="2.5" y="4.5" width="13" height="11" fill="none" stroke="#cfcfcf" stroke-width="1"/><g fill="#cfcfcf"><rect x="4.5" y="6.5" width="2" height="2"/><rect x="8" y="6.5" width="2" height="2"/><rect x="11.5" y="6.5" width="2" height="2"/><rect x="4.5" y="10.5" width="2" height="2"/><rect x="8" y="10.5" width="2" height="2"/><rect x="11.5" y="10.5" width="2" height="2"/></g></svg>
<span class="t" style="left:30.4px;top:691.75px;font-size:14px;color:#202020;letter-spacing:0.14px;">Erp.AGElectronicInvcError</span>
<svg style="left:6px;top:714px;" width="18" height="18" viewBox="0 0 18 18"><rect x="0.5" y="0.5" width="17" height="17" fill="#e4e4e4"/><rect x="2.5" y="4.5" width="13" height="11" fill="none" stroke="#cfcfcf" stroke-width="1"/><g fill="#cfcfcf"><rect x="4.5" y="6.5" width="2" height="2"/><rect x="8" y="6.5" width="2" height="2"/><rect x="11.5" y="6.5" width="2" height="2"/><rect x="4.5" y="10.5" width="2" height="2"/><rect x="8" y="10.5" width="2" height="2"/><rect x="11.5" y="10.5" width="2" height="2"/></g></svg>
<span class="t" style="left:30.4px;top:714.25px;font-size:14px;color:#202020;letter-spacing:0.14px;">Erp.AGEmissionPoint</span>
<svg style="left:6px;top:736px;" width="18" height="18" viewBox="0 0 18 18"><rect x="0.5" y="0.5" width="17" height="17" fill="#e4e4e4"/><rect x="2.5" y="4.5" width="13" height="11" fill="none" stroke="#cfcfcf" stroke-width="1"/><g fill="#cfcfcf"><rect x="4.5" y="6.5" width="2" height="2"/><rect x="8" y="6.5" width="2" height="2"/><rect x="11.5" y="6.5" width="2" height="2"/><rect x="4.5" y="10.5" width="2" height="2"/><rect x="8" y="10.5" width="2" height="2"/><rect x="11.5" y="10.5" width="2" height="2"/></g></svg>
<span class="t" style="left:30.4px;top:736.75px;font-size:14px;color:#202020;letter-spacing:0.14px;">Erp.AGIDDocType</span>
<svg style="left:6px;top:758px;" width="18" height="18" viewBox="0 0 18 18"><rect x="0.5" y="0.5" width="17" height="17" fill="#e4e4e4"/><rect x="2.5" y="4.5" width="13" height="11" fill="none" stroke="#cfcfcf" stroke-width="1"/><g fill="#cfcfcf"><rect x="4.5" y="6.5" width="2" height="2"/><rect x="8" y="6.5" width="2" height="2"/><rect x="11.5" y="6.5" width="2" height="2"/><rect x="4.5" y="10.5" width="2" height="2"/><rect x="8" y="10.5" width="2" height="2"/><rect x="11.5" y="10.5" width="2" height="2"/></g></svg>
<span class="t" style="left:30.4px;top:759.25px;font-size:14px;color:#202020;letter-spacing:0.14px;">Erp.AgingCredit</span>
<svg style="left:6px;top:781px;" width="18" height="18" viewBox="0 0 18 18"><rect x="0.5" y="0.5" width="17" height="17" fill="#e4e4e4"/><rect x="2.5" y="4.5" width="13" height="11" fill="none" stroke="#cfcfcf" stroke-width="1"/><g fill="#cfcfcf"><rect x="4.5" y="6.5" width="2" height="2"/><rect x="8" y="6.5" width="2" height="2"/><rect x="11.5" y="6.5" width="2" height="2"/><rect x="4.5" y="10.5" width="2" height="2"/><rect x="8" y="10.5" width="2" height="2"/><rect x="11.5" y="10.5" width="2" height="2"/></g></svg>
<span class="t" style="left:30.4px;top:781.75px;font-size:14px;color:#202020;letter-spacing:0.14px;">Erp.AgingRptFmt</span>
<svg style="left:6px;top:804px;" width="18" height="18" viewBox="0 0 18 18"><rect x="0.5" y="0.5" width="17" height="17" fill="#e4e4e4"/><rect x="2.5" y="4.5" width="13" height="11" fill="none" stroke="#cfcfcf" stroke-width="1"/><g fill="#cfcfcf"><rect x="4.5" y="6.5" width="2" height="2"/><rect x="8" y="6.5" width="2" height="2"/><rect x="11.5" y="6.5" width="2" height="2"/><rect x="4.5" y="10.5" width="2" height="2"/><rect x="8" y="10.5" width="2" height="2"/><rect x="11.5" y="10.5" width="2" height="2"/></g></svg>
<span class="t" style="left:30.4px;top:804.25px;font-size:14px;color:#202020;letter-spacing:0.14px;">Erp.AGInvoicingPoint</span>
<svg style="left:6px;top:826px;" width="18" height="18" viewBox="0 0 18 18"><rect x="0.5" y="0.5" width="17" height="17" fill="#e4e4e4"/><rect x="2.5" y="4.5" width="13" height="11" fill="none" stroke="#cfcfcf" stroke-width="1"/><g fill="#cfcfcf"><rect x="4.5" y="6.5" width="2" height="2"/><rect x="8" y="6.5" width="2" height="2"/><rect x="11.5" y="6.5" width="2" height="2"/><rect x="4.5" y="10.5" width="2" height="2"/><rect x="8" y="10.5" width="2" height="2"/><rect x="11.5" y="10.5" width="2" height="2"/></g></svg>
<span class="t" style="left:30.4px;top:826.75px;font-size:14px;color:#202020;letter-spacing:0.14px;">Erp.AGLocation</span>
<svg style="left:6px;top:848px;" width="18" height="18" viewBox="0 0 18 18"><rect x="0.5" y="0.5" width="17" height="17" fill="#e4e4e4"/><rect x="2.5" y="4.5" width="13" height="11" fill="none" stroke="#cfcfcf" stroke-width="1"/><g fill="#cfcfcf"><rect x="4.5" y="6.5" width="2" height="2"/><rect x="8" y="6.5" width="2" height="2"/><rect x="11.5" y="6.5" width="2" height="2"/><rect x="4.5" y="10.5" width="2" height="2"/><rect x="8" y="10.5" width="2" height="2"/><rect x="11.5" y="10.5" width="2" height="2"/></g></svg>
<span class="t" style="left:30.4px;top:849.25px;font-size:14px;color:#202020;letter-spacing:0.14px;">Erp.AGProvince</span>
<svg style="left:6px;top:871px;" width="18" height="18" viewBox="0 0 18 18"><rect x="0.5" y="0.5" width="17" height="17" fill="#e4e4e4"/><rect x="2.5" y="4.5" width="13" height="11" fill="none" stroke="#cfcfcf" stroke-width="1"/><g fill="#cfcfcf"><rect x="4.5" y="6.5" width="2" height="2"/><rect x="8" y="6.5" width="2" height="2"/><rect x="11.5" y="6.5" width="2" height="2"/><rect x="4.5" y="10.5" width="2" height="2"/><rect x="8" y="10.5" width="2" height="2"/><rect x="11.5" y="10.5" width="2" height="2"/></g></svg>
<span class="t" style="left:30.4px;top:871.75px;font-size:14px;color:#202020;letter-spacing:0.14px;">Erp.AGUserComp</span>
<svg style="left:6px;top:894px;" width="18" height="18" viewBox="0 0 18 18"><rect x="0.5" y="0.5" width="17" height="17" fill="#e4e4e4"/><rect x="2.5" y="4.5" width="13" height="11" fill="none" stroke="#cfcfcf" stroke-width="1"/><g fill="#cfcfcf"><rect x="4.5" y="6.5" width="2" height="2"/><rect x="8" y="6.5" width="2" height="2"/><rect x="11.5" y="6.5" width="2" height="2"/><rect x="4.5" y="10.5" width="2" height="2"/><rect x="8" y="10.5" width="2" height="2"/><rect x="11.5" y="10.5" width="2" height="2"/></g></svg>
<span class="t" style="left:30.4px;top:894.25px;font-size:14px;color:#202020;letter-spacing:0.14px;">Erp.AGWebServiceConfig</span>
<svg style="left:6px;top:916px;" width="18" height="18" viewBox="0 0 18 18"><rect x="0.5" y="0.5" width="17" height="17" fill="#e4e4e4"/><rect x="2.5" y="4.5" width="13" height="11" fill="none" stroke="#cfcfcf" stroke-width="1"/><g fill="#cfcfcf"><rect x="4.5" y="6.5" width="2" height="2"/><rect x="8" y="6.5" width="2" height="2"/><rect x="11.5" y="6.5" width="2" height="2"/><rect x="4.5" y="10.5" width="2" height="2"/><rect x="8" y="10.5" width="2" height="2"/><rect x="11.5" y="10.5" width="2" height="2"/></g></svg>
<span class="t" style="left:30.4px;top:916.75px;font-size:14px;color:#202020;letter-spacing:0.14px;">Erp.AlcAcct</span>
<svg style="left:6px;top:938px;" width="18" height="18" viewBox="0 0 18 18"><rect x="0.5" y="0.5" width="17" height="17" fill="#e4e4e4"/><rect x="2.5" y="4.5" width="13" height="11" fill="none" stroke="#cfcfcf" stroke-width="1"/><g fill="#cfcfcf"><rect x="4.5" y="6.5" width="2" height="2"/><rect x="8" y="6.5" width="2" height="2"/><rect x="11.5" y="6.5" width="2" height="2"/><rect x="4.5" y="10.5" width="2" height="2"/><rect x="8" y="10.5" width="2" height="2"/><rect x="11.5" y="10.5" width="2" height="2"/></g></svg>
<span class="t" style="left:30.4px;top:939.25px;font-size:14px;color:#202020;letter-spacing:0.14px;">Erp.AlcAcctCat</span>
<svg style="left:6px;top:961px;" width="18" height="5" viewBox="0 0 18 5"><rect x="0.5" y="0.5" width="17" height="17" fill="#e4e4e4"/><rect x="2.5" y="4.5" width="13" height="11" fill="none" stroke="#cfcfcf" stroke-width="1"/><g fill="#cfcfcf"><rect x="4.5" y="6.5" width="2" height="2"/><rect x="8" y="6.5" width="2" height="2"/><rect x="11.5" y="6.5" width="2" height="2"/><rect x="4.5" y="10.5" width="2" height="2"/><rect x="8" y="10.5" width="2" height="2"/><rect x="11.5" y="10.5" width="2" height="2"/></g></svg>
<div style="left:273px;top:282px;width:21px;height:684px;background:#c0c0c0;"></div>
<div style="left:273px;top:282px;width:21px;height:33px;background:#5a5856;"></div>
<svg style="left:273px;top:282px;" width="21" height="33" viewBox="0 0 21 33"><path d="M5.5 14H15.5L10.5 9Z" fill="#fff"/></svg>
<div style="left:273px;top:945px;width:21px;height:21px;background:#5a5856;"></div>
<svg style="left:273px;top:945px;" width="21" height="21" viewBox="0 0 21 21"><path d="M5.5 8H15.5L10.5 13Z" fill="#fff"/></svg>
<div style="left:294px;top:282px;width:3px;height:684px;background:#d8d8d8;"></div>
<div style="left:297px;top:217px;width:2px;height:750px;background:#0b1c26;"></div>
<div style="left:299px;top:217px;width:5px;height:750px;background:#003a5c;"></div>
<div style="left:304px;top:217px;width:713px;height:34px;background:#5a5856;"></div>
<svg style="left:308px;top:222px;" width="4" height="25" viewBox="0 0 4 25"><rect x="0.5" y="0.50" width="3.5" height="1.3" fill="#8c8a88"/><rect x="0.5" y="3.00" width="3.5" height="1.3" fill="#8c8a88"/><rect x="0.5" y="5.50" width="3.5" height="1.3" fill="#8c8a88"/><rect x="0.5" y="8.00" width="3.5" height="1.3" fill="#8c8a88"/><rect x="0.5" y="10.50" width="3.5" height="1.3" fill="#8c8a88"/><rect x="0.5" y="13.00" width="3.5" height="1.3" fill="#8c8a88"/><rect x="0.5" y="15.50" width="3.5" height="1.3" fill="#8c8a88"/><rect x="0.5" y="18.00" width="3.5" height="1.3" fill="#8c8a88"/><rect x="0.5" y="20.50" width="3.5" height="1.3" fill="#8c8a88"/><rect x="0.5" y="23.00" width="3.5" height="1.3" fill="#8c8a88"/></svg>
<svg style="left:323px;top:225px;" width="21" height="21" viewBox="0 0 21 21"><g fill="none" stroke="#e2e2e2" stroke-width="2.3"><rect x="2.5" y="0.5" width="5.5" height="11" rx="2.75" transform="rotate(-45 5.25 6)"/><rect x="12.5" y="9.5" width="5.5" height="11" rx="2.75" transform="rotate(-45 15.25 15)"/></g><path d="M7.5 8.5L12.5 12.5" stroke="#e2e2e2" stroke-width="1.2"/></svg>
<div style="left:352px;top:218px;width:1px;height:33px;background:#b0aeac;"></div>
<svg style="left:364px;top:226px;" width="18" height="18" viewBox="0 0 18 18"><path d="M3 3L15 15M15 3L3 15" stroke="#e2e2e2" stroke-width="4.6" stroke-linecap="square"/></svg>
<div style="left:392px;top:218px;width:1px;height:33px;background:#b0aeac;"></div>
<svg style="left:403px;top:226px;" width="19" height="19" viewBox="0 0 19 19"><g fill="#e2e2e2"><circle cx="9" cy="3.5" r="3.2"/><circle cx="3.5" cy="9.5" r="3.2"/><circle cx="15.5" cy="9.5" r="3.2"/><circle cx="9" cy="15.5" r="3.2"/></g><path d="M3.5 9.5H15.5" stroke="#e2e2e2" stroke-width="2"/></svg>
<span class="t" style="left:434px;top:228.80px;font-size:15px;color:#f2f2f2;">Business Objects...</span>
<div style="left:574px;top:218px;width:1px;height:33px;background:#b0aeac;"></div>
<span class="t" style="left:586.5px;top:227.76px;font-size:18px;color:#f2f2f2;">&Sigma;</span>
<div style="left:609px;top:218px;width:1px;height:33px;background:#b0aeac;"></div>
<span class="t" style="left:622.5px;top:228.46px;font-size:15.4px;color:#f2f2f2;">Arrange Diagram</span>
<svg style="left:742.5px;top:231.5px;" width="6" height="4" viewBox="0 0 6 4"><path d="M0 0H6L3.0 4Z" fill="#f4f4f4"/></svg>
<svg style="left:759.5px;top:241.5px;" width="7" height="4" viewBox="0 0 7 4"><path d="M0 0H7L3.5 4Z" fill="#f4f4f4"/></svg>
<div style="left:304px;top:251px;width:713px;height:696px;background:#ffffff;"></div>
<div style="left:304px;top:947px;width:713px;height:20px;background:#f0f0f0;"></div>
<svg style="left:309px;top:949px;" width="10" height="16" viewBox="0 0 10 16"><path d="M7.5 2.5L3 8L7.5 13.5" fill="none" stroke="#555" stroke-width="2"/></svg>
<div style="left:325px;top:948px;width:141px;height:18px;background:#cdcdcd;"></div>
<svg style="left:304px;top:251px" width="713" height="696" viewBox="0 0 713 696"><g stroke="#c6c6c6" stroke-width="1.4" stroke-dasharray="1.2 0.8 1.2 1.8"><line x1="19.20" y1="0" x2="19.20" y2="696"/><line x1="37.95" y1="0" x2="37.95" y2="696"/><line x1="56.70" y1="0" x2="56.70" y2="696"/><line x1="75.45" y1="0" x2="75.45" y2="696"/><line x1="94.20" y1="0" x2="94.20" y2="696"/><line x1="112.95" y1="0" x2="112.95" y2="696"/><line x1="131.70" y1="0" x2="131.70" y2="696"/><line x1="150.45" y1="0" x2="150.45" y2="696"/><line x1="169.20" y1="0" x2="169.20" y2="696"/><line x1="187.95" y1="0" x2="187.95" y2="696"/><line x1="206.70" y1="0" x2="206.70" y2="696"/><line x1="225.45" y1="0" x2="225.45" y2="696"/><line x1="244.20" y1="0" x2="244.20" y2="696"/><line x1="262.95" y1="0" x2="262.95" y2="696"/><line x1="281.70" y1="0" x2="281.70" y2="696"/><line x1="300.45" y1="0" x2="300.45" y2="696"/><line x1="319.20" y1="0" x2="319.20" y2="696"/><line x1="337.95" y1="0" x2="337.95" y2="696"/><line x1="356.70" y1="0" x2="356.70" y2="696"/><line x1="375.45" y1="0" x2="375.45" y2="696"/><line x1="394.20" y1="0" x2="394.20" y2="696"/><line x1="412.95" y1="0" x2="412.95" y2="696"/><line x1="431.70" y1="0" x2="431.70" y2="696"/><line x1="450.45" y1="0" x2="450.45" y2="696"/><line x1="469.20" y1="0" x2="469.20" y2="696"/><line x1="487.95" y1="0" x2="487.95" y2="696"/><line x1="506.70" y1="0" x2="506.70" y2="696"/><line x1="525.45" y1="0" x2="525.45" y2="696"/><line x1="544.20" y1="0" x2="544.20" y2="696"/><line x1="562.95" y1="0" x2="562.95" y2="696"/><line x1="581.70" y1="0" x2="581.70" y2="696"/><line x1="600.45" y1="0" x2="600.45" y2="696"/><line x1="619.20" y1="0" x2="619.20" y2="696"/><line x1="637.95" y1="0" x2="637.95" y2="696"/><line x1="656.70" y1="0" x2="656.70" y2="696"/><line x1="675.45" y1="0" x2="675.45" y2="696"/><line x1="694.20" y1="0" x2="694.20" y2="696"/><line x1="712.95" y1="0" x2="712.95" y2="696"/><line x1="0" y1="19.80" x2="713" y2="19.80"/><line x1="0" y1="38.55" x2="713" y2="38.55"/><line x1="0" y1="57.30" x2="713" y2="57.30"/><line x1="0" y1="76.05" x2="713" y2="76.05"/><line x1="0" y1="94.80" x2="713" y2="94.80"/><line x1="0" y1="113.55" x2="713" y2="113.55"/><line x1="0" y1="132.30" x2="713" y2="132.30"/><line x1="0" y1="151.05" x2="713" y2="151.05"/><line x1="0" y1="169.80" x2="713" y2="169.80"/><line x1="0" y1="188.55" x2="713" y2="188.55"/><line x1="0" y1="207.30" x2="713" y2="207.30"/><line x1="0" y1="226.05" x2="713" y2="226.05"/><line x1="0" y1="244.80" x2="713" y2="244.80"/><line x1="0" y1="263.55" x2="713" y2="263.55"/><line x1="0" y1="282.30" x2="713" y2="282.30"/><line x1="0" y1="301.05" x2="713" y2="301.05"/><line x1="0" y1="319.80" x2="713" y2="319.80"/><line x1="0" y1="338.55" x2="713" y2="338.55"/><line x1="0" y1="357.30" x2="713" y2="357.30"/><line x1="0" y1="376.05" x2="713" y2="376.05"/><line x1="0" y1="394.80" x2="713" y2="394.80"/><line x1="0" y1="413.55" x2="713" y2="413.55"/><line x1="0" y1="432.30" x2="713" y2="432.30"/><line x1="0" y1="451.05" x2="713" y2="451.05"/><line x1="0" y1="469.80" x2="713" y2="469.80"/><line x1="0" y1="488.55" x2="713" y2="488.55"/><line x1="0" y1="507.30" x2="713" y2="507.30"/><line x1="0" y1="526.05" x2="713" y2="526.05"/><line x1="0" y1="544.80" x2="713" y2="544.80"/><line x1="0" y1="563.55" x2="713" y2="563.55"/><line x1="0" y1="582.30" x2="713" y2="582.30"/><line x1="0" y1="601.05" x2="713" y2="601.05"/><line x1="0" y1="619.80" x2="713" y2="619.80"/><line x1="0" y1="638.55" x2="713" y2="638.55"/><line x1="0" y1="657.30" x2="713" y2="657.30"/><line x1="0" y1="676.05" x2="713" y2="676.05"/><line x1="0" y1="694.80" x2="713" y2="694.80"/></g><line x1="0" y1="0.5" x2="713" y2="0.5" stroke="#000" stroke-width="1" stroke-dasharray="1 1"/><line x1="0.5" y1="0" x2="0.5" y2="696" stroke="#000" stroke-width="1" stroke-dasharray="1 1"/><line x1="182.00" y1="53.80" x2="257.50" y2="53.80" stroke="#1a1a72" stroke-width="2.6"/><line x1="287.50" y1="53.80" x2="351.00" y2="53.80" stroke="#1a1a72" stroke-width="2.6"/><line x1="100.50" y1="88.00" x2="100.50" y2="192.10" stroke="#1a1a72" stroke-width="2.6"/><line x1="100.50" y1="222.10" x2="100.50" y2="313.00" stroke="#1a1a72" stroke-width="2.6"/><line x1="100.50" y1="369.00" x2="100.50" y2="398.00" stroke="#1a1a72" stroke-width="2.6"/><line x1="100.50" y1="428.00" x2="100.50" y2="445.00" stroke="#1a1a72" stroke-width="2.6"/><line x1="133.30" y1="88.00" x2="288.20" y2="259.91" stroke="#1a1a72" stroke-width="2.6"/><line x1="308.28" y1="282.20" x2="454.70" y2="444.70" stroke="#1a1a72" stroke-width="2.6"/><line x1="182.30" y1="85.00" x2="262.41" y2="116.44" stroke="#1a1a72" stroke-width="2.6"/><line x1="290.33" y1="127.40" x2="358.60" y2="154.20" stroke="#1a1a72" stroke-width="2.6"/><g transform="translate(272.50 53.80) rotate(0)"><path d="M0 -12.8 H-10.8 Q-12.8 -12.8 -12.8 -10.8 V10.8 Q-12.8 12.8 -10.8 12.8 H0" fill="#d3d3d3" stroke="#6a6ab0" stroke-width="1.4"/><path d="M13 0L0 13L-13 0L0 -13Z" fill="#d3d3d3" stroke="#3c3c7e" stroke-width="2.1" stroke-linejoin="round"/></g><g transform="translate(100.45 207.10) rotate(90)"><path d="M0 -12.8 H-10.8 Q-12.8 -12.8 -12.8 -10.8 V10.8 Q-12.8 12.8 -10.8 12.8 H0" fill="#d3d3d3" stroke="#6a6ab0" stroke-width="1.4"/><path d="M13 0L0 13L-13 0L0 -13Z" fill="#d3d3d3" stroke="#3c3c7e" stroke-width="2.1" stroke-linejoin="round"/></g><g transform="translate(100.50 413.00) rotate(90)"><path d="M0 -12.8 H-10.8 Q-12.8 -12.8 -12.8 -10.8 V10.8 Q-12.8 12.8 -10.8 12.8 H0" fill="#d3d3d3" stroke="#6a6ab0" stroke-width="1.4"/><path d="M13 0L0 13L-13 0L0 -13Z" fill="#d3d3d3" stroke="#3c3c7e" stroke-width="2.1" stroke-linejoin="round"/></g><g transform="translate(298.30 271.00) rotate(47.97)"><path d="M0 -12.8 H-10.8 Q-12.8 -12.8 -12.8 -10.8 V10.8 Q-12.8 12.8 -10.8 12.8 H0" fill="#d3d3d3" stroke="#6a6ab0" stroke-width="1.4"/><path d="M13 0L0 13L-13 0L0 -13Z" fill="#d3d3d3" stroke="#3c3c7e" stroke-width="2.1" stroke-linejoin="round"/></g><g transform="translate(276.30 122.10) rotate(21.4)"><path d="M0 -12.8 H-10.8 Q-12.8 -12.8 -12.8 -10.8 V10.8 Q-12.8 12.8 -10.8 12.8 H0" fill="#d3d3d3" stroke="#6a6ab0" stroke-width="1.4"/><path d="M13 0L0 13L-13 0L0 -13Z" fill="#d3d3d3" stroke="#3c3c7e" stroke-width="2.1" stroke-linejoin="round"/></g></svg>
<div style="left:335.3px;top:283px;width:150px;height:56px;background:#90ee90;box-shadow:9px 9px 2px -1px rgba(0,0,0,0.3);"></div>
<div style="left:335.3px;top:284.20px;width:143px;height:20px;text-align:center;font:bold 16px/1 'Liberation Serif',serif;color:#000;-webkit-text-stroke:0.25px #000;white-space:nowrap;">Erp.DMRHead</div>
<svg style="left:321.80px;top:269.50px" width="27" height="27" viewBox="0 0 27 27"><circle cx="13.5" cy="13.5" r="12.6" fill="#ffff00" stroke="#1a1a1a" stroke-width="1.4"/><text x="13.3" y="16.9" text-anchor="middle" font-family="Liberation Serif" font-weight="bold" font-size="16" fill="#000">1</text></svg>
<div style="left:654.4px;top:283px;width:150px;height:56px;background:#90ee90;box-shadow:9px 9px 2px -1px rgba(0,0,0,0.3);"></div>
<div style="left:654.4px;top:284.20px;width:143px;height:20px;text-align:center;font:bold 16px/1 'Liberation Serif',serif;color:#000;-webkit-text-stroke:0.25px #000;white-space:nowrap;">Erp.DMRActn</div>
<svg style="left:640.90px;top:269.50px" width="27" height="27" viewBox="0 0 27 27"><circle cx="13.5" cy="13.5" r="12.6" fill="#ffff00" stroke="#1a1a1a" stroke-width="1.4"/><text x="13.3" y="16.9" text-anchor="middle" font-family="Liberation Serif" font-weight="bold" font-size="16" fill="#000">2</text></svg>
<div style="left:335.3px;top:564.2px;width:150px;height:56px;background:#90ee90;box-shadow:9px 9px 2px -1px rgba(0,0,0,0.3);"></div>
<div style="left:335.3px;top:565.40px;width:143px;height:20px;text-align:center;font:bold 16px/1 'Liberation Serif',serif;color:#000;-webkit-text-stroke:0.25px #000;white-space:nowrap;">Erp.NonConf</div>
<svg style="left:321.80px;top:550.70px" width="27" height="27" viewBox="0 0 27 27"><circle cx="13.5" cy="13.5" r="12.6" fill="#ffff00" stroke="#1a1a1a" stroke-width="1.4"/><text x="13.3" y="16.9" text-anchor="middle" font-family="Liberation Serif" font-weight="bold" font-size="16" fill="#000">3</text></svg>
<div style="left:710.7px;top:695.7px;width:150px;height:56px;background:#90ee90;box-shadow:9px 9px 2px -1px rgba(0,0,0,0.3);"></div>
<div style="left:710.7px;top:696.90px;width:143px;height:20px;text-align:center;font:bold 16px/1 'Liberation Serif',serif;color:#000;-webkit-text-stroke:0.25px #000;white-space:nowrap;">Erp.Vendor</div>
<svg style="left:697.20px;top:682.20px" width="27" height="27" viewBox="0 0 27 27"><circle cx="13.5" cy="13.5" r="12.6" fill="#ffff00" stroke="#1a1a1a" stroke-width="1.4"/><text x="13.3" y="16.9" text-anchor="middle" font-family="Liberation Serif" font-weight="bold" font-size="16" fill="#000">4</text></svg>
<div style="left:335.3px;top:695.7px;width:150px;height:56px;background:#90ee90;box-shadow:9px 9px 2px -1px rgba(0,0,0,0.3);"></div>
<div style="left:335.3px;top:696.90px;width:143px;height:20px;text-align:center;font:bold 16px/1 'Liberation Serif',serif;color:#000;-webkit-text-stroke:0.25px #000;white-space:nowrap;">Erp.Reason</div>
<svg style="left:321.80px;top:682.20px" width="27" height="27" viewBox="0 0 27 27"><circle cx="13.5" cy="13.5" r="12.6" fill="#ffff00" stroke="#1a1a1a" stroke-width="1.4"/><text x="13.3" y="16.9" text-anchor="middle" font-family="Liberation Serif" font-weight="bold" font-size="16" fill="#000">5</text></svg>
<div style="left:673.3px;top:414.2px;width:150px;height:56px;background:#7fffd4;box-shadow:9px 9px 2px -1px rgba(0,0,0,0.3);"></div>
<div style="left:673.3px;top:415.40px;width:143px;height:20px;text-align:center;font:bold 16px/1 'Liberation Serif',serif;color:#000;-webkit-text-stroke:0.25px #000;white-space:nowrap;">Attachments</div>
<div style="left:673.3px;top:449.50px;width:146px;height:22px;text-align:center;font:italic bold 17px/1 'Liberation Serif',serif;color:#000;text-decoration:underline;white-space:nowrap;">Attachments</div>
<svg style="left:659.80px;top:400.70px" width="27" height="27" viewBox="0 0 27 27"><circle cx="13.5" cy="13.5" r="12.6" fill="#ffff00" stroke="#1a1a1a" stroke-width="1.4"/><text x="13.3" y="16.9" text-anchor="middle" font-family="Liberation Serif" font-weight="bold" font-size="16" fill="#000">6</text></svg>
<svg style="left:481.5px;top:331.2px" width="10" height="10" viewBox="0 0 10 10"><rect x="0.7" y="0.7" width="8.6" height="8.6" rx="1" fill="#7c7c7c" stroke="#111" stroke-width="1.4"/><path d="M3 3L7 7M7 3L3 7" stroke="#222" stroke-width="1.3"/></svg>
<svg style="left:657.7px;top:399.8px" width="10" height="10" viewBox="0 0 10 10"><rect x="0.7" y="0.7" width="8.6" height="8.6" rx="1" fill="#7c7c7c" stroke="#111" stroke-width="1.4"/><circle cx="5" cy="5" r="1.8" fill="#222"/></svg>
<div style="left:4px;top:966px;width:294px;height:1px;background:#a0a0a0;"></div>
<div style="left:4px;top:967px;width:1013px;height:5px;background:#efefef;"></div>
<div style="left:4px;top:972.6px;width:1013px;height:33.4px;background:#5a5856;"></div>
<svg style="left:8px;top:977px;" width="4" height="24" viewBox="0 0 4 24"><rect x="0.5" y="0.50" width="3.5" height="1.3" fill="#8c8a88"/><rect x="0.5" y="3.00" width="3.5" height="1.3" fill="#8c8a88"/><rect x="0.5" y="5.50" width="3.5" height="1.3" fill="#8c8a88"/><rect x="0.5" y="8.00" width="3.5" height="1.3" fill="#8c8a88"/><rect x="0.5" y="10.50" width="3.5" height="1.3" fill="#8c8a88"/><rect x="0.5" y="13.00" width="3.5" height="1.3" fill="#8c8a88"/><rect x="0.5" y="15.50" width="3.5" height="1.3" fill="#8c8a88"/><rect x="0.5" y="18.00" width="3.5" height="1.3" fill="#8c8a88"/><rect x="0.5" y="20.50" width="3.5" height="1.3" fill="#8c8a88"/></svg>
<svg style="left:24px;top:979px;" width="17" height="21" viewBox="0 0 17 21"><path d="M6 1.5H14Q15.5 1.5 15.5 3V18Q15.5 19.5 14 19.5H3Q1.5 19.5 1.5 18V6Z" fill="none" stroke="#e2e2e2" stroke-width="1.9" stroke-linejoin="round"/><path d="M2 6L6 2L5.5 5.5Z" fill="#e2e2e2"/></svg>
<svg style="left:56px;top:982px;" width="18" height="18" viewBox="0 0 18 18"><path d="M3 3L15 15M15 3L3 15" stroke="#e2e2e2" stroke-width="4.6" stroke-linecap="square"/></svg>
<div style="left:84px;top:976px;width:1px;height:30px;background:#b0aeac;"></div>
<svg style="left:98px;top:984px;" width="13" height="12" viewBox="0 0 13 12"><path d="M6.5 0L13 6.5H9V12H4V6.5H0Z" fill="#e2e2e2"/></svg>
<svg style="left:131px;top:984px;" width="13" height="12" viewBox="0 0 13 12"><path d="M6.5 12L13 5.5H9V0H4V5.5H0Z" fill="#e2e2e2"/></svg>
<div style="left:158px;top:976px;width:1px;height:30px;background:#b0aeac;"></div>
<svg style="left:173px;top:983px;" width="10" height="14" viewBox="0 0 10 14"><path d="M1 1V13L9 7Z" fill="#e6e6e6"/></svg>
<svg style="left:205px;top:983px;" width="10" height="14" viewBox="0 0 10 14"><path d="M9 1V13L1 7Z" fill="#e6e6e6"/></svg>
<svg style="left:230.5px;top:995px;" width="7" height="4" viewBox="0 0 7 4"><path d="M0 0H7L3.5 4Z" fill="#f4f4f4"/></svg>
<svg style="left:245px;top:977px;" width="4" height="24" viewBox="0 0 4 24"><rect x="0.5" y="0.50" width="3.5" height="1.3" fill="#8c8a88"/><rect x="0.5" y="3.00" width="3.5" height="1.3" fill="#8c8a88"/><rect x="0.5" y="5.50" width="3.5" height="1.3" fill="#8c8a88"/><rect x="0.5" y="8.00" width="3.5" height="1.3" fill="#8c8a88"/><rect x="0.5" y="10.50" width="3.5" height="1.3" fill="#8c8a88"/><rect x="0.5" y="13.00" width="3.5" height="1.3" fill="#8c8a88"/><rect x="0.5" y="15.50" width="3.5" height="1.3" fill="#8c8a88"/><rect x="0.5" y="18.00" width="3.5" height="1.3" fill="#8c8a88"/><rect x="0.5" y="20.50" width="3.5" height="1.3" fill="#8c8a88"/></svg>
<svg style="left:259px;top:980px;" width="24" height="21" viewBox="0 0 24 21"><text x="0" y="9.5" font-size="10.5" font-family="Liberation Sans" font-weight="bold" fill="#e2e2e2">A</text><text x="0.5" y="20" font-size="10.5" font-family="Liberation Sans" font-weight="bold" fill="#e2e2e2">Z</text><path d="M16 1.5V19M11 14L16 19L21 14" fill="none" stroke="#e2e2e2" stroke-width="2"/></svg>
<svg style="left:291.5px;top:995px;" width="7" height="4" viewBox="0 0 7 4"><path d="M0 0H7L3.5 4Z" fill="#f4f4f4"/></svg>
<div style="left:4px;top:1006px;width:1013px;height:30px;background:#d6d6d6;"></div>
<div style="left:86px;top:1007px;width:111px;height:29px;background:#69bb2b;border:1px solid #80ca5c;border-bottom:none;border-radius:3px 3px 0 0;box-shadow:inset 1px 1px 0 #e6f3dc,inset -1px 0 0 #e6f3dc;"></div>
<span class="t" style="left:14.5px;top:1018.15px;font-size:14px;color:#1e1e1e;">Table List</span>
<span class="t" style="left:94.2px;top:1015.15px;font-size:14px;color:#f4fbef;">Table Relations</span>
<span class="t" style="left:209.8px;top:1018.15px;font-size:14px;color:#1e1e1e;">Table Criteria</span>
<span class="t" style="left:313px;top:1018.15px;font-size:14px;color:#1e1e1e;">SubQuery Criteria</span>
<span class="t" style="left:442.8px;top:1018.15px;font-size:14px;color:#1e1e1e;">Function Call Parameters</span>
<span class="t" style="left:621.9px;top:1018.15px;font-size:14px;color:#1e1e1e;">Pivot SubQuery FOR Clause</span>
<div style="left:4px;top:1036px;width:1013px;height:117px;background:#f0f0f0;"></div>
<div style="left:9px;top:1041px;width:254px;height:28px;background:#dcdcdc;"></div>
<span class="t" style="left:94.4px;top:1048.56px;font-size:14.7px;color:#a0a0a0;">Dictionary(0)</span>
<span class="t" style="left:680.5px;top:1048.30px;font-size:15px;color:#1a1a1a;">Join type:</span>
<div style="left:755px;top:1043px;width:270px;height:25px;background:#ffffff;box-sizing:border-box;border:1px solid #a8a8a8;"></div>
<span class="t" style="left:760.3px;top:1048.15px;font-size:14px;color:#1a1a1a;">All rows from DMRHead</span>
<div style="left:5px;top:1079px;width:1012px;height:24px;background:#5a5856;"></div>
<div style="left:5px;top:1103px;width:23px;height:24px;background:#ececec;"></div>
<svg style="left:13.5px;top:1109px;" width="8" height="14" viewBox="0 0 8 14"><path d="M1 1V13L7 7Z" fill="#000"/></svg>
<div style="left:28px;top:1103px;width:989px;height:24px;background:#0078d7;"></div>
<div style="left:4px;top:1127px;width:1013px;height:26px;background:#ffffff;"></div>
<div style="left:5px;top:1078px;width:1012px;height:1px;background:#a0a0a0;"></div>
<div style="left:5px;top:1102px;width:1012px;height:1px;background:#a0a0a0;"></div>
<div style="left:28px;top:1079px;width:1px;height:24px;background:#8f8d8b;"></div>
<div style="left:28px;top:1103px;width:0;height:24px;border-left:1px dotted #c8dcf0;"></div>
<div style="left:41px;top:1079px;width:1px;height:24px;background:#8f8d8b;"></div>
<div style="left:41px;top:1103px;width:0;height:24px;border-left:1px dotted #c8dcf0;"></div>
<div style="left:142px;top:1079px;width:1px;height:24px;background:#8f8d8b;"></div>
<div style="left:142px;top:1103px;width:0;height:24px;border-left:1px dotted #c8dcf0;"></div>
<div style="left:257px;top:1079px;width:1px;height:24px;background:#8f8d8b;"></div>
<div style="left:257px;top:1103px;width:0;height:24px;border-left:1px dotted #c8dcf0;"></div>
<div style="left:308px;top:1079px;width:1px;height:24px;background:#8f8d8b;"></div>
<div style="left:308px;top:1103px;width:0;height:24px;border-left:1px dotted #c8dcf0;"></div>
<div style="left:590px;top:1079px;width:1px;height:24px;background:#8f8d8b;"></div>
<div style="left:590px;top:1103px;width:0;height:24px;border-left:1px dotted #c8dcf0;"></div>
<div style="left:692px;top:1079px;width:1px;height:24px;background:#8f8d8b;"></div>
<div style="left:692px;top:1103px;width:0;height:24px;border-left:1px dotted #c8dcf0;"></div>
<div style="left:1005px;top:1079px;width:1px;height:24px;background:#8f8d8b;"></div>
<div style="left:1005px;top:1103px;width:0;height:24px;border-left:1px dotted #c8dcf0;"></div>
<div style="left:28px;top:1126px;width:989px;height:0;border-top:1px dotted #c8dcf0;"></div>
<span class="t" style="left:30px;top:1083.90px;font-size:14.3px;color:#f2f2f2;">#</span>
<span class="t" style="left:44px;top:1083.90px;font-size:14.3px;color:#f2f2f2;">And/Or</span>
<span class="t" style="left:146px;top:1083.90px;font-size:14.3px;color:#f2f2f2;">(</span>
<span class="t" style="left:260px;top:1083.90px;font-size:14.3px;color:#f2f2f2;">Not</span>
<span class="t" style="left:312px;top:1083.90px;font-size:14.3px;color:#f2f2f2;">DMRHead field or any expression</span>
<span class="t" style="left:592.8px;top:1083.90px;font-size:14.3px;color:#f2f2f2;">Operation</span>
<span class="t" style="left:695.7px;top:1083.90px;font-size:14.3px;color:#f2f2f2;">Attachments field or any expression</span>
<span class="t" style="left:1008px;top:1083.90px;font-size:14.3px;color:#f2f2f2;">)</span>
<span class="t" style="left:30px;top:1103.00px;font-size:13px;color:#ffffff;">1</span>
<div style="left:275px;top:1107px;width:13px;height:13px;background:#ffffff;"></div>
<span class="t" style="left:314.7px;top:1106.75px;font-size:14px;color:#ffffff;">DMRNum</span>
<span class="t" style="left:597px;top:1106.75px;font-size:14px;color:#ffffff;">=</span>
<span class="t" style="left:698.3px;top:1106.75px;font-size:14px;color:#ffffff;">XFileAttch_Key1</span>
</div></body></html>
